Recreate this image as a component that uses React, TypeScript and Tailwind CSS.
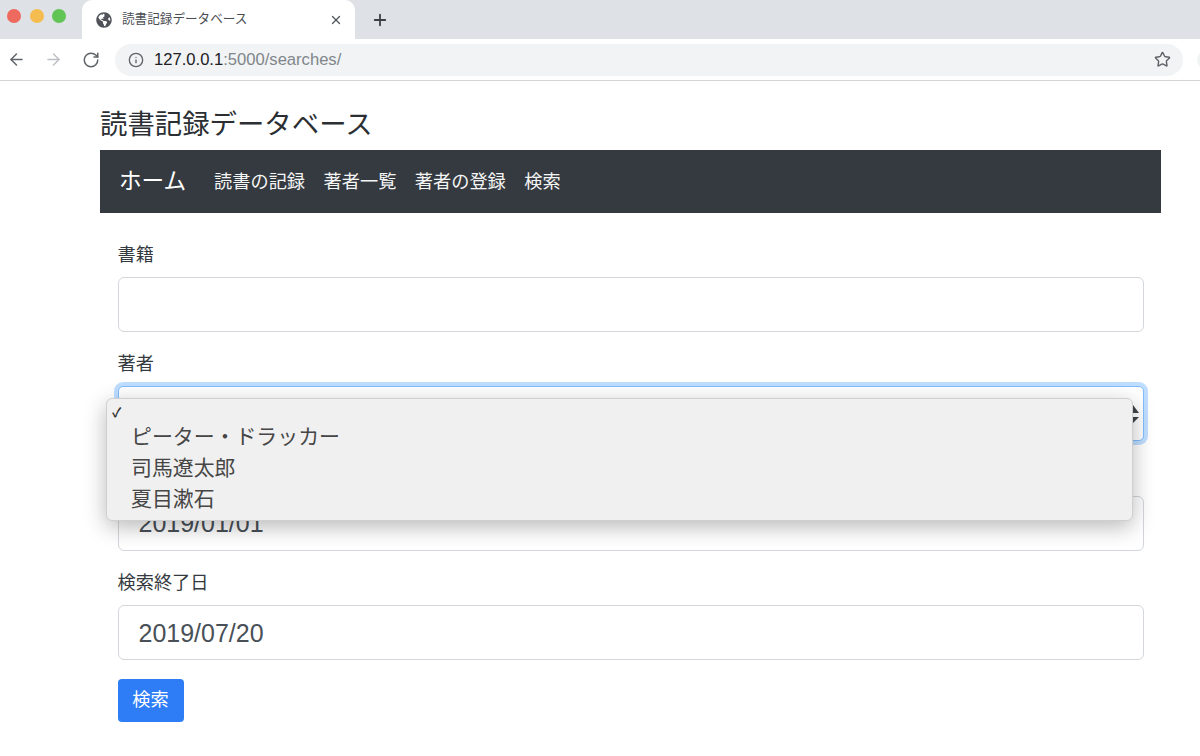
import React from "react";
import { ArrowLeft, ArrowRight, RotateCw, Info, Star, X, Plus } from "lucide-react";
import { FaGlobeAmericas } from "react-icons/fa";

const font = "[font-family:'Liberation_Sans','Noto_Sans_CJK_JP',sans-serif]";

function Field({ label, value, last }: { label: string; value?: string; last?: boolean }) {
  return (
    <div className={last ? "mb-[19px]" : "mb-[17.33px]"}>
      <div className="h-[28px] mb-[9px] text-[18.2px] leading-[30px] text-[#343a40]">{label}</div>
      <div className="h-[55px] border-[1.5px] border-[#d3d7db] rounded-[6px] bg-white pl-[20px] pt-[2px] flex items-center text-[25px] text-[#495057]">
        {value}
      </div>
    </div>
  );
}

export default function App() {
  return (
    <div className={`${font} w-[1200px] h-[756px] overflow-hidden bg-white`}>
      {/* tab strip */}
      <div className="h-[39px] bg-[#dee1e6] flex items-center">
        <div className="flex items-center gap-[8.5px] pl-[7px] w-[82px] pb-[7px]">
          <span className="w-[14px] h-[14px] rounded-full bg-[#ee6a5f]" />
          <span className="w-[14px] h-[14px] rounded-full bg-[#f5bd4f]" />
          <span className="w-[14px] h-[14px] rounded-full bg-[#61c454]" />
        </div>
        <div className="w-[273px] h-[39px] bg-white rounded-t-[10px] flex items-center pl-[14px] pr-[12px]">
          <FaGlobeAmericas className="w-[16px] h-[16px] text-[#50545a]" />
          <span className="ml-[10px] text-[12.6px] text-[#4a4d52] flex-1 whitespace-nowrap">読書記録データベース</span>
          <X className="w-[14px] h-[14px] text-[#50545a]" strokeWidth={2.2} />
        </div>
        <Plus className="ml-[16px] w-[18px] h-[18px] text-[#3c4043]" strokeWidth={2.4} />
      </div>
      {/* toolbar */}
      <div className="h-[42px] border-b border-[#d3d5d8] bg-white flex items-center pl-[7px]">
        <ArrowLeft className="w-[19px] h-[19px] text-[#5f6368] shrink-0" strokeWidth={1.8} />
        <ArrowRight className="ml-[18px] w-[19px] h-[19px] text-[#bcbfc3] shrink-0" strokeWidth={1.8} />
        <RotateCw className="ml-[19px] w-[18px] h-[18px] text-[#5f6368] shrink-0" strokeWidth={2} />
        <div className="ml-[15px] w-[1068px] h-[32px] shrink-0 rounded-full bg-[#f1f3f4] flex items-center pl-[13px] pr-[12px] text-[16.6px]">
          <Info className="w-[16px] h-[16px] text-[#5f6368]" strokeWidth={2} />
          <span className="ml-[10px] flex-1 pt-[2px]">
            <span className="text-[#202124]">127.0.0.1</span>
            <span className="text-[#80868b]">:5000/searches/</span>
          </span>
          <Star className="w-[17px] h-[17px] text-[#5f6368]" strokeWidth={2} />
        </div>
        <span className="ml-[14px] w-[20px] h-[20px] rounded-full bg-[#f1f3f4] shrink-0" />
      </div>
      {/* page */}
      <div className="ml-[100px] w-[1061px]">
        <h1 className="h-[69px] pt-[22px] text-[27.4px] leading-[43px] text-[#2b2f33] whitespace-nowrap">
          読書記録データベース
        </h1>
        <nav className="h-[63px] bg-[#343a40] flex items-center pl-[19px] text-white">
          <span className="text-[22.6px] mr-[28px]">ホーム</span>
          <div className="flex gap-[18.5px] text-[18.2px] text-[#f4f5f5] pt-[2px]">
            <span>読書の記録</span>
            <span>著者一覧</span>
            <span>著者の登録</span>
            <span>検索</span>
          </div>
        </nav>
        <div className="relative pt-[27px] px-[17.5px]">
          <Field label="書籍" />
          <div className="mb-[17.33px]">
            <div className="h-[28px] mb-[9px] text-[18.2px] leading-[30px] text-[#343a40]">著者</div>
            <div className="relative h-[55px] border border-[#80bdff] rounded-[5px] bg-white shadow-[0_0_0_4px_rgba(0,123,255,0.25)]">
              <svg className="absolute right-[4px] top-[18px]" width="12" height="20" viewBox="0 0 12 20">
                <path d="M6 0 L12 8 L0 8 Z M0 12 L12 12 L6 18 Z" fill="#404448" />
              </svg>
            </div>
          </div>
          <Field label="検索開始日" value="2019/01/01" />
          <Field label="検索終了日" value="2019/07/20" last />
          <button className="w-[66px] h-[43px] rounded-[4px] bg-[#2e7df7] text-white text-[18.2px]">検索</button>
          {/* native select popup */}
          <div className="absolute left-[6px] top-[184.5px] w-[1027px] h-[123px] rounded-[6px] bg-[#f0f0f0] border border-[#cfcfcf] shadow-[0_6px_22px_rgba(0,0,0,0.28)] text-[20.9px] leading-[31px] text-[#464646]">
            <div className="h-[22px] pl-[5px] text-[13px] leading-[27px] font-bold text-[#333]">✓</div>
            <div className="pl-[24px] whitespace-nowrap">ピーター・ドラッカー</div>
            <div className="pl-[24px]">司馬遼太郎</div>
            <div className="pl-[24px]">夏目漱石</div>
          </div>
        </div>
      </div>
    </div>
  );
}
